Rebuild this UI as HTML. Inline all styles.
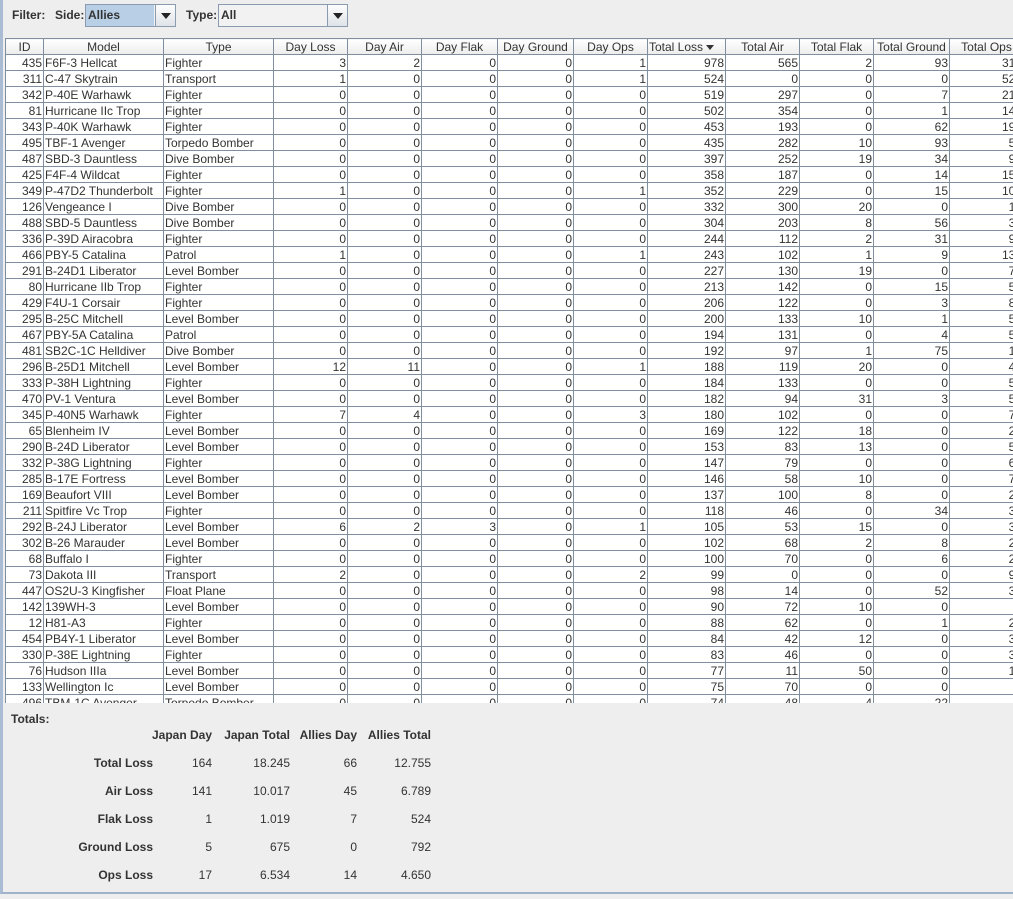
<!DOCTYPE html>
<html><head><meta charset="utf-8"><style>
*{margin:0;padding:0;box-sizing:border-box}
body{width:1013px;height:899px;overflow:hidden;background:#eeeeee;font-family:"Liberation Sans",Arial,sans-serif;font-size:12px;color:#333;position:relative}
.frame{position:absolute;left:0;top:0;width:1020px;height:894px;border-left:3px solid #a9bcd3;border-bottom:2px solid #9fb3cc}
.lbl{position:absolute;top:8px;font-weight:bold;color:#333}
.combo{position:absolute;top:4px;height:23px;border:1px solid #8a9bb0;background:#f2f2f2}
.combo .t{position:absolute;left:0;top:0;bottom:0;padding-left:2px;line-height:21px;font-weight:bold}
.combo .b{position:absolute;right:0;top:0;bottom:0;width:20px;border-left:1px solid #8a9bb0;background:linear-gradient(#fdfdfd,#dfe3e8)}
.combo .b:after{content:"";position:absolute;left:5px;top:8px;border-left:5px solid transparent;border-right:5px solid transparent;border-top:6px solid #222}
.tw{position:absolute;left:5px;top:38px;width:1030px;height:665px;overflow:hidden;background:#fff}
table{border-collapse:collapse;table-layout:fixed;width:1030px}
td,th{border:1px solid #7f8fa0;height:16px;padding:0 1px;white-space:nowrap;overflow:hidden;line-height:14px;font-size:12px;color:#333}
th{font-weight:normal;background:linear-gradient(#fff,#ececec);text-align:center;font-size:12px}
td{text-align:right}
td:nth-child(2),td:nth-child(3){text-align:left}
.arr{display:inline-block;width:0;height:0;border-left:4px solid transparent;border-right:4px solid transparent;border-top:5px solid #333;vertical-align:middle;margin-left:3px}
.tot{position:absolute;left:3px;top:703px;width:1010px;height:189px;background:#eeeeee}
.tot div{position:absolute;font-weight:bold;color:#333}
.r{text-align:right}
.n{font-weight:normal!important;text-align:right}
</style></head><body>
<div class="frame"></div>
<div class="lbl" style="left:12px">Filter:</div>
<div class="lbl" style="left:55px">Side:</div>
<div class="combo" style="left:85px;width:91px"><div class="t" style="right:21px;background:#b8cfe5">Allies</div><div class="b"></div></div>
<div class="lbl" style="left:186px">Type:</div>
<div class="combo" style="left:218px;width:130px"><div class="t" style="right:21px">All</div><div class="b"></div></div>
<div class="tw"><table>
<colgroup><col style="width:38px"><col style="width:120px"><col style="width:110px"><col style="width:74px"><col style="width:74px"><col style="width:76px"><col style="width:76px"><col style="width:74px"><col style="width:78px"><col style="width:74px"><col style="width:74px"><col style="width:76px"><col style="width:74px"><col style="width:32px"></colgroup>
<tr><th>ID</th><th>Model</th><th>Type</th><th>Day Loss</th><th>Day Air</th><th>Day Flak</th><th>Day Ground</th><th>Day Ops</th><th style="text-align:left">Total Loss<span class="arr"></span></th><th>Total Air</th><th>Total Flak</th><th>Total Ground</th><th>Total Ops</th><th></th></tr>
<tr><td>435</td><td>F6F-3 Hellcat</td><td>Fighter</td><td>3</td><td>2</td><td>0</td><td>0</td><td>1</td><td>978</td><td>565</td><td>2</td><td>93</td><td>318</td><td></td></tr>
<tr><td>311</td><td>C-47 Skytrain</td><td>Transport</td><td>1</td><td>0</td><td>0</td><td>0</td><td>1</td><td>524</td><td>0</td><td>0</td><td>0</td><td>524</td><td></td></tr>
<tr><td>342</td><td>P-40E Warhawk</td><td>Fighter</td><td>0</td><td>0</td><td>0</td><td>0</td><td>0</td><td>519</td><td>297</td><td>0</td><td>7</td><td>215</td><td></td></tr>
<tr><td>81</td><td>Hurricane IIc Trop</td><td>Fighter</td><td>0</td><td>0</td><td>0</td><td>0</td><td>0</td><td>502</td><td>354</td><td>0</td><td>1</td><td>147</td><td></td></tr>
<tr><td>343</td><td>P-40K Warhawk</td><td>Fighter</td><td>0</td><td>0</td><td>0</td><td>0</td><td>0</td><td>453</td><td>193</td><td>0</td><td>62</td><td>198</td><td></td></tr>
<tr><td>495</td><td>TBF-1 Avenger</td><td>Torpedo Bomber</td><td>0</td><td>0</td><td>0</td><td>0</td><td>0</td><td>435</td><td>282</td><td>10</td><td>93</td><td>50</td><td></td></tr>
<tr><td>487</td><td>SBD-3 Dauntless</td><td>Dive Bomber</td><td>0</td><td>0</td><td>0</td><td>0</td><td>0</td><td>397</td><td>252</td><td>19</td><td>34</td><td>92</td><td></td></tr>
<tr><td>425</td><td>F4F-4 Wildcat</td><td>Fighter</td><td>0</td><td>0</td><td>0</td><td>0</td><td>0</td><td>358</td><td>187</td><td>0</td><td>14</td><td>157</td><td></td></tr>
<tr><td>349</td><td>P-47D2 Thunderbolt</td><td>Fighter</td><td>1</td><td>0</td><td>0</td><td>0</td><td>1</td><td>352</td><td>229</td><td>0</td><td>15</td><td>108</td><td></td></tr>
<tr><td>126</td><td>Vengeance I</td><td>Dive Bomber</td><td>0</td><td>0</td><td>0</td><td>0</td><td>0</td><td>332</td><td>300</td><td>20</td><td>0</td><td>12</td><td></td></tr>
<tr><td>488</td><td>SBD-5 Dauntless</td><td>Dive Bomber</td><td>0</td><td>0</td><td>0</td><td>0</td><td>0</td><td>304</td><td>203</td><td>8</td><td>56</td><td>37</td><td></td></tr>
<tr><td>336</td><td>P-39D Airacobra</td><td>Fighter</td><td>0</td><td>0</td><td>0</td><td>0</td><td>0</td><td>244</td><td>112</td><td>2</td><td>31</td><td>99</td><td></td></tr>
<tr><td>466</td><td>PBY-5 Catalina</td><td>Patrol</td><td>1</td><td>0</td><td>0</td><td>0</td><td>1</td><td>243</td><td>102</td><td>1</td><td>9</td><td>131</td><td></td></tr>
<tr><td>291</td><td>B-24D1 Liberator</td><td>Level Bomber</td><td>0</td><td>0</td><td>0</td><td>0</td><td>0</td><td>227</td><td>130</td><td>19</td><td>0</td><td>78</td><td></td></tr>
<tr><td>80</td><td>Hurricane IIb Trop</td><td>Fighter</td><td>0</td><td>0</td><td>0</td><td>0</td><td>0</td><td>213</td><td>142</td><td>0</td><td>15</td><td>56</td><td></td></tr>
<tr><td>429</td><td>F4U-1 Corsair</td><td>Fighter</td><td>0</td><td>0</td><td>0</td><td>0</td><td>0</td><td>206</td><td>122</td><td>0</td><td>3</td><td>81</td><td></td></tr>
<tr><td>295</td><td>B-25C Mitchell</td><td>Level Bomber</td><td>0</td><td>0</td><td>0</td><td>0</td><td>0</td><td>200</td><td>133</td><td>10</td><td>1</td><td>56</td><td></td></tr>
<tr><td>467</td><td>PBY-5A Catalina</td><td>Patrol</td><td>0</td><td>0</td><td>0</td><td>0</td><td>0</td><td>194</td><td>131</td><td>0</td><td>4</td><td>59</td><td></td></tr>
<tr><td>481</td><td>SB2C-1C Helldiver</td><td>Dive Bomber</td><td>0</td><td>0</td><td>0</td><td>0</td><td>0</td><td>192</td><td>97</td><td>1</td><td>75</td><td>19</td><td></td></tr>
<tr><td>296</td><td>B-25D1 Mitchell</td><td>Level Bomber</td><td>12</td><td>11</td><td>0</td><td>0</td><td>1</td><td>188</td><td>119</td><td>20</td><td>0</td><td>49</td><td></td></tr>
<tr><td>333</td><td>P-38H Lightning</td><td>Fighter</td><td>0</td><td>0</td><td>0</td><td>0</td><td>0</td><td>184</td><td>133</td><td>0</td><td>0</td><td>51</td><td></td></tr>
<tr><td>470</td><td>PV-1 Ventura</td><td>Level Bomber</td><td>0</td><td>0</td><td>0</td><td>0</td><td>0</td><td>182</td><td>94</td><td>31</td><td>3</td><td>54</td><td></td></tr>
<tr><td>345</td><td>P-40N5 Warhawk</td><td>Fighter</td><td>7</td><td>4</td><td>0</td><td>0</td><td>3</td><td>180</td><td>102</td><td>0</td><td>0</td><td>78</td><td></td></tr>
<tr><td>65</td><td>Blenheim IV</td><td>Level Bomber</td><td>0</td><td>0</td><td>0</td><td>0</td><td>0</td><td>169</td><td>122</td><td>18</td><td>0</td><td>29</td><td></td></tr>
<tr><td>290</td><td>B-24D Liberator</td><td>Level Bomber</td><td>0</td><td>0</td><td>0</td><td>0</td><td>0</td><td>153</td><td>83</td><td>13</td><td>0</td><td>57</td><td></td></tr>
<tr><td>332</td><td>P-38G Lightning</td><td>Fighter</td><td>0</td><td>0</td><td>0</td><td>0</td><td>0</td><td>147</td><td>79</td><td>0</td><td>0</td><td>68</td><td></td></tr>
<tr><td>285</td><td>B-17E Fortress</td><td>Level Bomber</td><td>0</td><td>0</td><td>0</td><td>0</td><td>0</td><td>146</td><td>58</td><td>10</td><td>0</td><td>78</td><td></td></tr>
<tr><td>169</td><td>Beaufort VIII</td><td>Level Bomber</td><td>0</td><td>0</td><td>0</td><td>0</td><td>0</td><td>137</td><td>100</td><td>8</td><td>0</td><td>29</td><td></td></tr>
<tr><td>211</td><td>Spitfire Vc Trop</td><td>Fighter</td><td>0</td><td>0</td><td>0</td><td>0</td><td>0</td><td>118</td><td>46</td><td>0</td><td>34</td><td>38</td><td></td></tr>
<tr><td>292</td><td>B-24J Liberator</td><td>Level Bomber</td><td>6</td><td>2</td><td>3</td><td>0</td><td>1</td><td>105</td><td>53</td><td>15</td><td>0</td><td>37</td><td></td></tr>
<tr><td>302</td><td>B-26 Marauder</td><td>Level Bomber</td><td>0</td><td>0</td><td>0</td><td>0</td><td>0</td><td>102</td><td>68</td><td>2</td><td>8</td><td>24</td><td></td></tr>
<tr><td>68</td><td>Buffalo I</td><td>Fighter</td><td>0</td><td>0</td><td>0</td><td>0</td><td>0</td><td>100</td><td>70</td><td>0</td><td>6</td><td>24</td><td></td></tr>
<tr><td>73</td><td>Dakota III</td><td>Transport</td><td>2</td><td>0</td><td>0</td><td>0</td><td>2</td><td>99</td><td>0</td><td>0</td><td>0</td><td>99</td><td></td></tr>
<tr><td>447</td><td>OS2U-3 Kingfisher</td><td>Float Plane</td><td>0</td><td>0</td><td>0</td><td>0</td><td>0</td><td>98</td><td>14</td><td>0</td><td>52</td><td>32</td><td></td></tr>
<tr><td>142</td><td>139WH-3</td><td>Level Bomber</td><td>0</td><td>0</td><td>0</td><td>0</td><td>0</td><td>90</td><td>72</td><td>10</td><td>0</td><td>8</td><td></td></tr>
<tr><td>12</td><td>H81-A3</td><td>Fighter</td><td>0</td><td>0</td><td>0</td><td>0</td><td>0</td><td>88</td><td>62</td><td>0</td><td>1</td><td>25</td><td></td></tr>
<tr><td>454</td><td>PB4Y-1 Liberator</td><td>Level Bomber</td><td>0</td><td>0</td><td>0</td><td>0</td><td>0</td><td>84</td><td>42</td><td>12</td><td>0</td><td>30</td><td></td></tr>
<tr><td>330</td><td>P-38E Lightning</td><td>Fighter</td><td>0</td><td>0</td><td>0</td><td>0</td><td>0</td><td>83</td><td>46</td><td>0</td><td>0</td><td>37</td><td></td></tr>
<tr><td>76</td><td>Hudson IIIa</td><td>Level Bomber</td><td>0</td><td>0</td><td>0</td><td>0</td><td>0</td><td>77</td><td>11</td><td>50</td><td>0</td><td>16</td><td></td></tr>
<tr><td>133</td><td>Wellington Ic</td><td>Level Bomber</td><td>0</td><td>0</td><td>0</td><td>0</td><td>0</td><td>75</td><td>70</td><td>0</td><td>0</td><td>5</td><td></td></tr>
<tr><td>496</td><td>TBM-1C Avenger</td><td>Torpedo Bomber</td><td>0</td><td>0</td><td>0</td><td>0</td><td>0</td><td>74</td><td>48</td><td>4</td><td>22</td><td>0</td><td></td></tr>
</table></div>
<div class="tot">
<div style="left:8px;top:9px">Totals:</div>
<div class="r" style="left:130px;width:79px;top:25px">Japan Day</div>
<div class="r" style="left:210px;width:77px;top:25px">Japan Total</div>
<div class="r" style="left:290px;width:64px;top:25px">Allies Day</div>
<div class="r" style="left:358px;width:70px;top:25px">Allies Total</div>
<div class="r" style="left:20px;width:130px;top:53px">Total Loss</div>
<div class="n" style="left:130px;width:79px;top:53px">164</div><div class="n" style="left:210px;width:77px;top:53px">18.245</div><div class="n" style="left:290px;width:64px;top:53px">66</div><div class="n" style="left:358px;width:70px;top:53px">12.755</div>
<div class="r" style="left:20px;width:130px;top:81px">Air Loss</div>
<div class="n" style="left:130px;width:79px;top:81px">141</div><div class="n" style="left:210px;width:77px;top:81px">10.017</div><div class="n" style="left:290px;width:64px;top:81px">45</div><div class="n" style="left:358px;width:70px;top:81px">6.789</div>
<div class="r" style="left:20px;width:130px;top:109px">Flak Loss</div>
<div class="n" style="left:130px;width:79px;top:109px">1</div><div class="n" style="left:210px;width:77px;top:109px">1.019</div><div class="n" style="left:290px;width:64px;top:109px">7</div><div class="n" style="left:358px;width:70px;top:109px">524</div>
<div class="r" style="left:20px;width:130px;top:137px">Ground Loss</div>
<div class="n" style="left:130px;width:79px;top:137px">5</div><div class="n" style="left:210px;width:77px;top:137px">675</div><div class="n" style="left:290px;width:64px;top:137px">0</div><div class="n" style="left:358px;width:70px;top:137px">792</div>
<div class="r" style="left:20px;width:130px;top:165px">Ops Loss</div>
<div class="n" style="left:130px;width:79px;top:165px">17</div><div class="n" style="left:210px;width:77px;top:165px">6.534</div><div class="n" style="left:290px;width:64px;top:165px">14</div><div class="n" style="left:358px;width:70px;top:165px">4.650</div>
</div>
</body></html>
